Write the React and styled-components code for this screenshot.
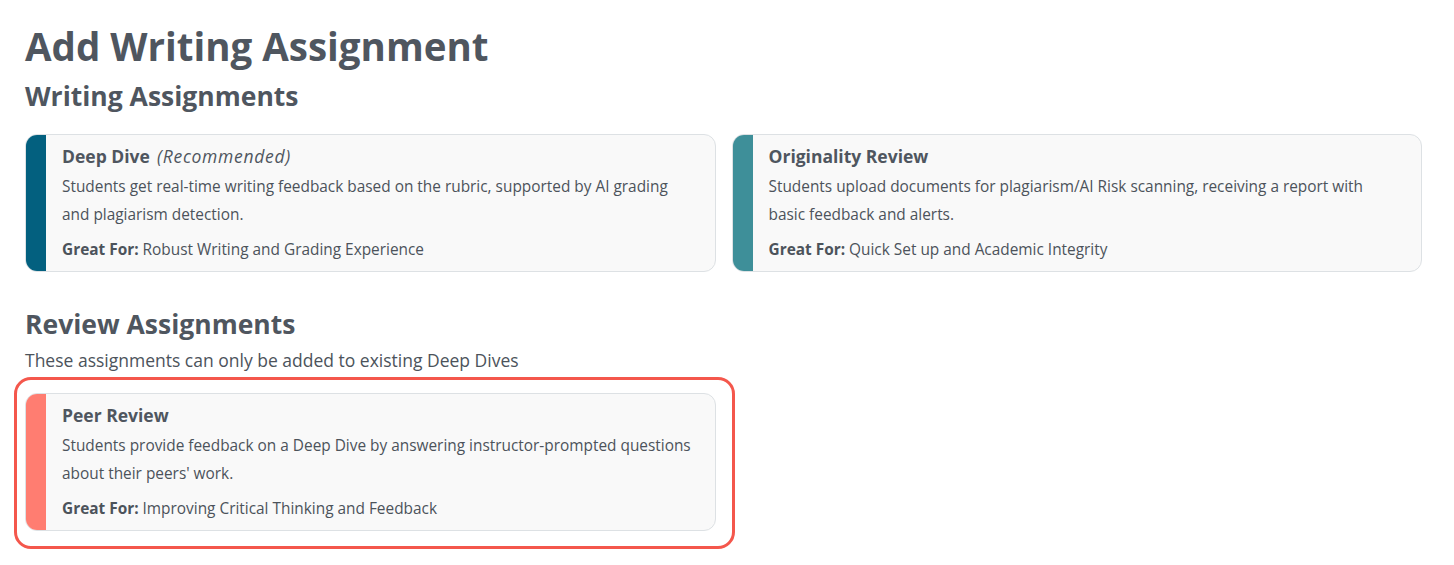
import React from 'react'
import styled, { createGlobalStyle } from 'styled-components'

const GlobalStyle = createGlobalStyle`
  body {
    margin: 0;
    background: #ffffff;
    font-family: "Open Sans", "Liberation Sans", sans-serif;
    color: #4c535b;
  }
`

const assignmentTypes = {
  writing: [
    {
      id: 'deep-dive',
      name: 'Deep Dive',
      note: '(Recommended)',
      accent: '#03607f',
      description:
        'Students get real-time writing feedback based on the rubric, supported by AI grading and plagiarism detection.',
      greatFor: 'Robust Writing and Grading Experience',
    },
    {
      id: 'originality',
      name: 'Originality Review',
      accent: '#3e8f99',
      description:
        'Students upload documents for plagiarism/AI Risk scanning, receiving a report with basic feedback and alerts.',
      greatFor: 'Quick Set up and Academic Integrity',
    },
  ],
  review: [
    {
      id: 'peer-review',
      name: 'Peer Review',
      accent: '#ff7d71',
      selected: true,
      description:
        "Students provide feedback on a Deep Dive by answering instructor-prompted questions about their peers' work.",
      greatFor: 'Improving Critical Thinking and Feedback',
    },
  ],
}

function AssignmentCard({ type }) {
  return (
    <Card>
      <Stripe $color={type.accent} />
      <CardBody>
        <CardTitle>
          {type.name}
          {type.note && <Note> {type.note}</Note>}
        </CardTitle>
        <Description>{type.description}</Description>
        <GreatFor>
          <strong>Great For:</strong> {type.greatFor}
        </GreatFor>
      </CardBody>
    </Card>
  )
}

export default function App() {
  return (
    <>
      <GlobalStyle />
      <Page>
        <Title>Add Writing Assignment</Title>

        <SectionTitle>Writing Assignments</SectionTitle>
        <CardGrid>
          {assignmentTypes.writing.map((t) => (
            <AssignmentCard key={t.id} type={t} />
          ))}
        </CardGrid>

        <SectionTitle $spaced>Review Assignments</SectionTitle>
        <SectionNote>These assignments can only be added to existing Deep Dives</SectionNote>
        <CardGrid>
          {assignmentTypes.review.map((t) =>
            t.selected ? (
              <Selected key={t.id}>
                <AssignmentCard type={t} />
              </Selected>
            ) : (
              <AssignmentCard key={t.id} type={t} />
            )
          )}
        </CardGrid>
      </Page>
    </>
  )
}

const Page = styled.div`
  padding: 23px 32px 40px 25px;
`

const Title = styled.h1`
  margin: 0 0 11px;
  font-size: 38.5px;
  line-height: 46px;
  font-weight: 700;
  color: #4f565f;
`

const SectionTitle = styled.h2`
  margin: ${(p) => (p.$spaced ? '36px' : '0')} 0 ${(p) => (p.$spaced ? '8px' : '22px')};
  font-size: 26.5px;
  line-height: 32px;
  font-weight: 700;
  color: #4f565f;
`

const SectionNote = styled.p`
  margin: 0 0 21px;
  font-size: 17.5px;
  line-height: 24px;
  color: #4c535b;
`

const CardGrid = styled.div`
  display: grid;
  grid-template-columns: 1fr 1fr;
  gap: 16px;
`

const Card = styled.div`
  display: flex;
  background: #f9f9f9;
  border: 1px solid #dde1e4;
  border-radius: 12px;
  overflow: hidden;
`

const Stripe = styled.div`
  flex: 0 0 20px;
  background: ${(p) => p.$color};
`

const CardBody = styled.div`
  flex: 1;
  padding: 9px 20px 9px 16px;
`

const CardTitle = styled.div`
  margin-bottom: 5px;
  font-size: 17.5px;
  line-height: 24px;
  font-weight: 700;
  color: #4f565f;
`

const Note = styled.span`
  margin-left: 2px;
  font-weight: 400;
  font-style: italic;
  letter-spacing: 0.7px;
`

const Description = styled.div`
  font-size: 15.4px;
  line-height: 28px;
  color: #4c535b;
`

const GreatFor = styled.div`
  margin-top: 9px;
  font-size: 15.4px;
  line-height: 24px;
  color: #4c535b;

  strong {
    font-weight: 700;
  }
`

const Selected = styled.div`
  position: relative;

  &::after {
    content: '';
    position: absolute;
    top: -16px;
    left: -11px;
    right: -19px;
    bottom: -18px;
    border: 3px solid #f4574c;
    border-radius: 17px;
    pointer-events: none;
  }
`
